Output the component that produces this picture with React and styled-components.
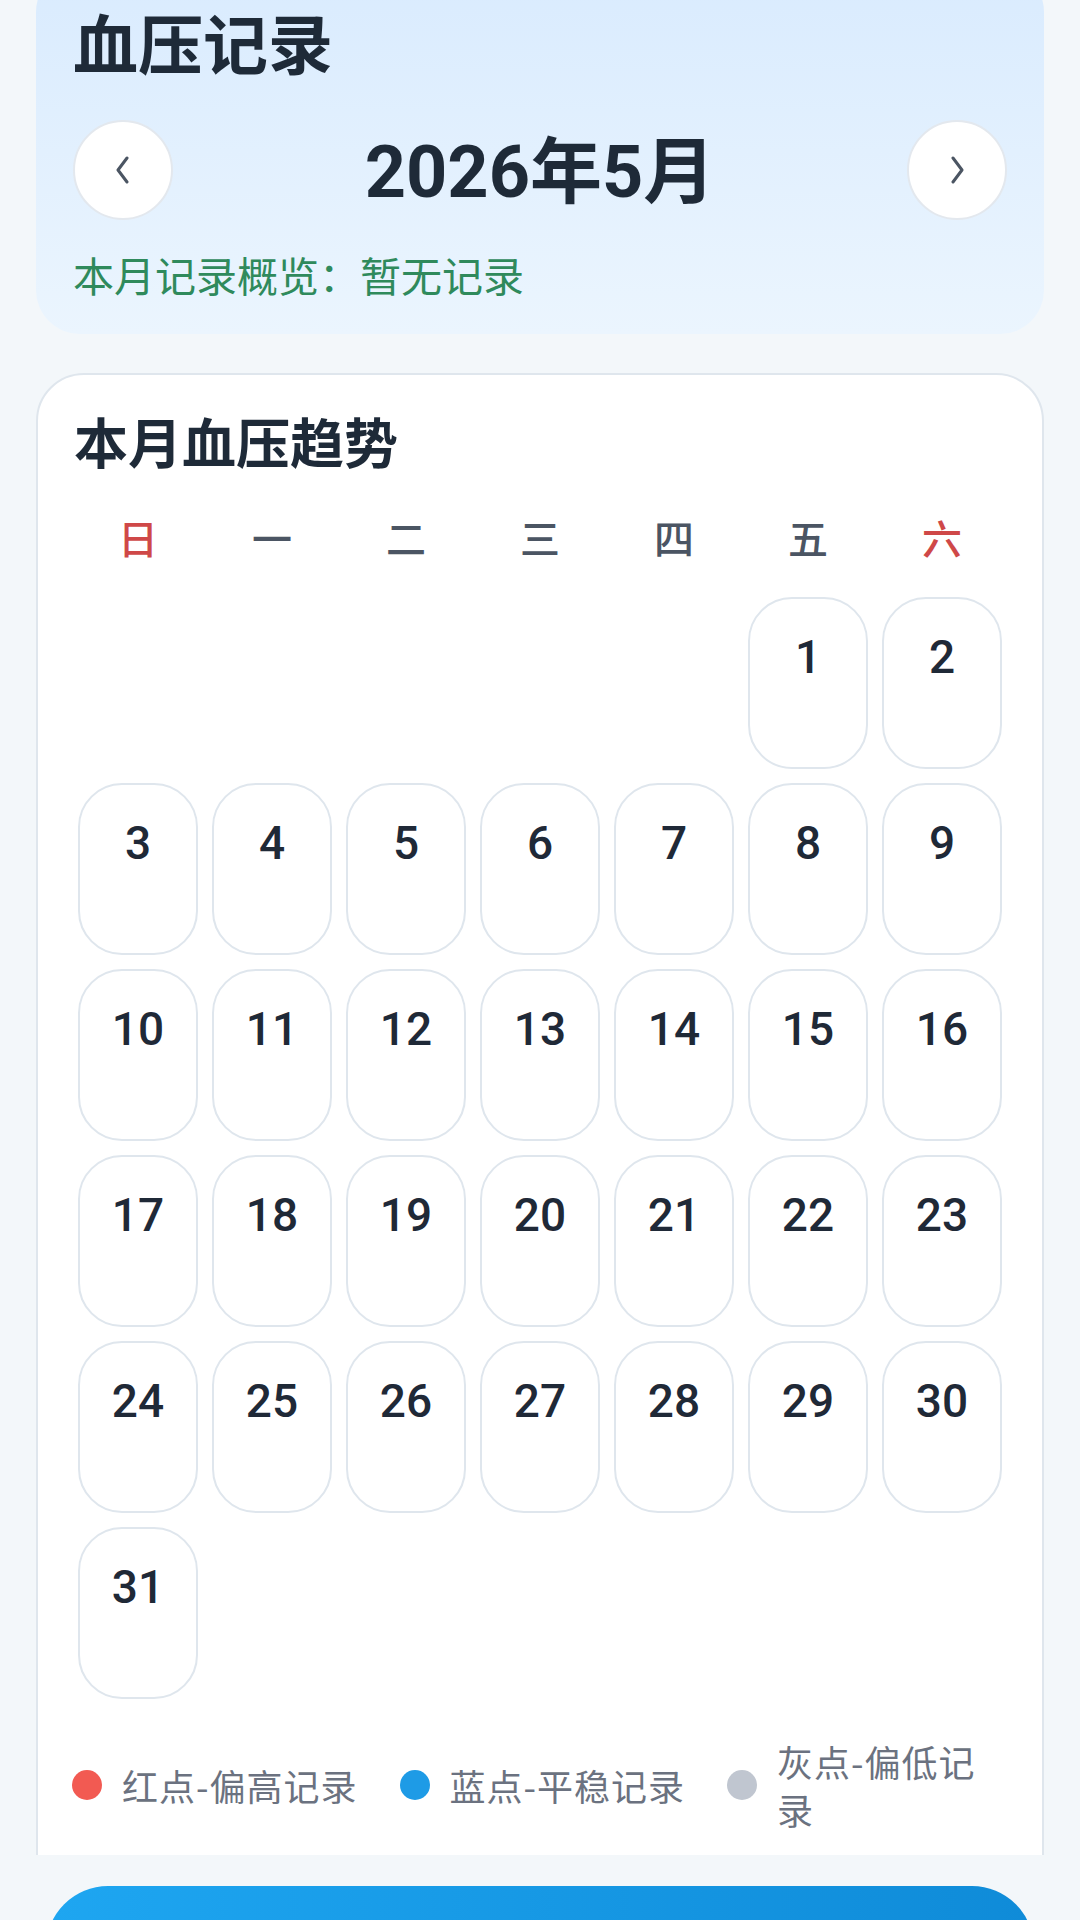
import React from 'react';
import styled, { createGlobalStyle } from 'styled-components';

const GlobalStyle = createGlobalStyle`
    html, body {
        margin: 0;
        padding: 0;
        background: #f3f7fa;
    }
    body {
        font-family: Roboto, "Noto Sans CJK SC", sans-serif;
        color: #1f2937;
    }
    * {
        box-sizing: border-box;
    }
`;

const Page = styled.div`
    width: 1080px;
    min-height: 1920px;
    padding: 0 36px 200px;
    overflow: hidden;
`;

const HeaderCard = styled.section`
    margin-top: -32px;
    padding: 40px 37px 31px;
    border-radius: 44px;
    background: linear-gradient(180deg, #d9ebfe 0%, #ebf5fe 100%);
`;

const PageTitle = styled.h1`
    margin: 0;
    font-size: 65px;
    line-height: 78px;
    font-weight: 700;
    color: #1e2a38;
`;

const MonthNav = styled.div`
    margin-top: 34px;
    display: flex;
    align-items: center;
    justify-content: space-between;
`;

const RoundButton = styled.button`
    width: 100px;
    height: 100px;
    border-radius: 50%;
    border: 2px solid #e3e8ee;
    background: #fff;
    display: flex;
    align-items: center;
    justify-content: center;
    padding: 0;
    cursor: pointer;
`;

const MonthLabel = styled.div`
    font-size: 72px;
    font-weight: 700;
    line-height: 1;
    color: #1e2a38;
    padding-top: 6px;
`;

const Summary = styled.p`
    margin: 26px 0 0;
    font-family: "Noto Sans CJK SC", sans-serif;
    font-size: 41px;
    line-height: 57px;
    color: #2f8a5c;
`;

const TrendCard = styled.section`
    margin-top: 39px;
    padding: 36px 34px 90px;
    border: 2px solid #dfe6ed;
    border-radius: 48px;
    background: #fff;
`;

const CardTitle = styled.h2`
    margin: 0 0 0 2px;
    font-size: 54px;
    line-height: 70px;
    font-weight: 700;
    color: #1e2a38;
`;

const Grid = styled.div`
    margin: 0 6px;
    display: grid;
    grid-template-columns: repeat(7, 1fr);
    column-gap: 14px;
`;

const WeekRow = styled(Grid)`
    margin-top: 32px;
`;

const WeekDay = styled.div`
    text-align: center;
    font-size: 40px;
    line-height: 56px;
    font-weight: 500;
    color: ${(p) => (p.$weekend ? '#cf4848' : '#4b5563')};
`;

const DayGrid = styled(Grid)`
    margin-top: 28px;
    row-gap: 14px;
`;

const DayCell = styled.div`
    height: 172px;
    border: 2px solid #dfe6ed;
    border-radius: 44px;
    padding-top: 31px;
    text-align: center;
    font-size: 46px;
    line-height: 55px;
    font-weight: 500;
    color: #1f2937;
    grid-column-start: ${(p) => p.$start || 'auto'};
`;

const Legend = styled.div`
    margin-top: 38px;
    display: flex;
    align-items: center;
    gap: 42px;
`;

const LegendItem = styled.div`
    display: flex;
    align-items: center;
    gap: 20px;
    flex: ${(p) => (p.$fill ? '1 1 0' : '0 0 auto')};
    min-width: 0;
`;

const Dot = styled.span`
    flex: 0 0 30px;
    width: 30px;
    height: 30px;
    border-radius: 50%;
    background: ${(p) => p.$color};
`;

const LegendText = styled.span`
    font-family: "Noto Sans CJK SC", sans-serif;
    font-size: 36px;
    line-height: 48px;
    letter-spacing: 1px;
    color: #6b7280;
`;

const BottomBar = styled.div`
    position: fixed;
    left: 0;
    right: 0;
    bottom: 0;
    height: 65px;
    padding: 31px 46px 0;
    background: #f3f7fa;
`;

const PrimaryButton = styled.button`
    width: 100%;
    height: 124px;
    padding: 40px 0 0;
    border: none;
    border-radius: 62px;
    background: linear-gradient(90deg, #1ea6f1 0%, #0f8bd8 100%);
    color: #fff;
    font-size: 44px;
    line-height: 44px;
    font-weight: 700;
    font-family: inherit;
`;

const Chevron = ({ dir }) => (
    <svg width="16" height="28" viewBox="0 0 16 28" fill="none">
        <polyline
            points={dir === 'left' ? '12,2 3,14 12,26' : '4,2 13,14 4,26'}
            stroke="#4b5563"
            strokeWidth="3"
            strokeLinecap="round"
            strokeLinejoin="round"
        />
    </svg>
);

const weekDays = ['日', '一', '二', '三', '四', '五', '六'];
const days = Array.from({ length: 31 }, (_, i) => i + 1);
const firstWeekday = 5; // 2026-05-01 is a Friday

const legend = [
    { color: '#f25a52', text: '红点-偏高记录' },
    { color: '#1e9be6', text: '蓝点-平稳记录' },
    { color: '#c0c6d0', text: '灰点-偏低记录' },
];

const App = () => {
    return (
        <>
            <GlobalStyle />
            <Page>
                <HeaderCard>
                    <PageTitle>血压记录</PageTitle>
                    <MonthNav>
                        <RoundButton aria-label="上一月">
                            <Chevron dir="left" />
                        </RoundButton>
                        <MonthLabel>2026年5月</MonthLabel>
                        <RoundButton aria-label="下一月">
                            <Chevron dir="right" />
                        </RoundButton>
                    </MonthNav>
                    <Summary>本月记录概览：暂无记录</Summary>
                </HeaderCard>

                <TrendCard>
                    <CardTitle>本月血压趋势</CardTitle>
                    <WeekRow>
                        {weekDays.map((d, i) => (
                            <WeekDay key={d} $weekend={i === 0 || i === 6}>
                                {d}
                            </WeekDay>
                        ))}
                    </WeekRow>
                    <DayGrid>
                        {days.map((d) => (
                            <DayCell key={d} $start={d === 1 ? firstWeekday + 1 : null}>
                                {d}
                            </DayCell>
                        ))}
                    </DayGrid>
                    <Legend>
                        {legend.map((item, i) => (
                            <LegendItem key={item.text} $fill={i === legend.length - 1}>
                                <Dot $color={item.color} />
                                <LegendText>{item.text}</LegendText>
                            </LegendItem>
                        ))}
                    </Legend>
                </TrendCard>
            </Page>
            <BottomBar>
                <PrimaryButton>记录今日血压</PrimaryButton>
            </BottomBar>
        </>
    );
};

export default App;
